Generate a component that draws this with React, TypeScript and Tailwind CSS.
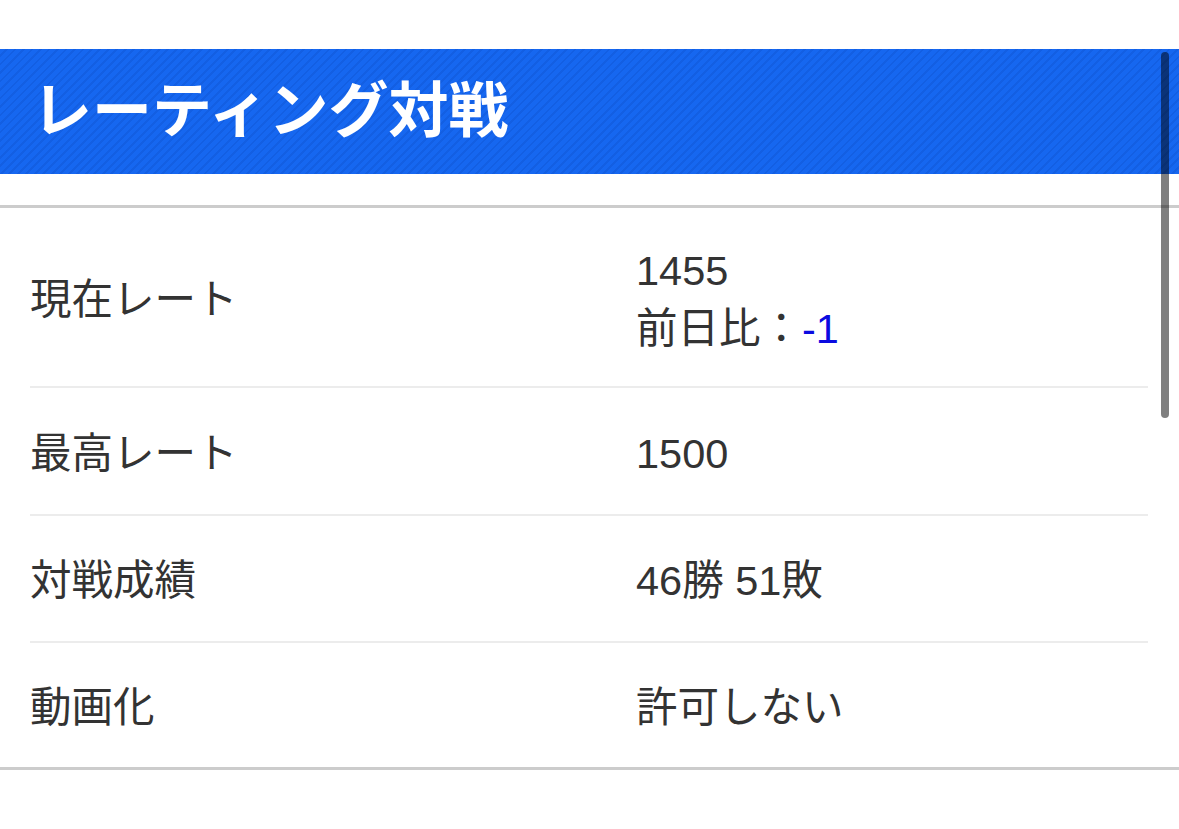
import React from 'react';

type Row = {
  label: string;
  value: React.ReactNode;
  height: string;
  last?: boolean;
};

const rows: Row[] = [
  {
    label: '現在レート',
    value: (
      <>
        <div>1455</div>
        <div>
          前日比：<span className="text-[#0b0be0]">-1</span>
        </div>
      </>
    ),
    height: 'h-[180px]',
  },
  { label: '最高レート', value: '1500', height: 'h-[128px]' },
  { label: '対戦成績', value: '46勝 51敗', height: 'h-[127px]' },
  { label: '動画化', value: '許可しない', height: 'h-[124px]', last: true },
];

function App() {
  return (
    <div className="relative min-h-screen bg-white pt-[49px] font-['Liberation_Sans','Noto_Sans_CJK_JP',sans-serif] text-[#333333]">
      <header className="flex h-[125px] items-center bg-[#1667f0] bg-[image:repeating-linear-gradient(135deg,#1667f0_0px,#1667f0_4px,#135fe3_4px,#135fe3_6px)] px-[32px]">
        <h1 className="text-[60px] font-bold leading-none text-white">レーティング対戦</h1>
      </header>

      <section className="mt-[31px] border-y-[3px] border-[#cccccc]">
        <dl className="ml-[30px] mr-[31px]">
          {rows.map((row) => (
            <div
              key={row.label}
              className={`grid grid-cols-[606px_1fr] items-center pt-[5px] text-[41.5px] leading-[58px] ${row.height} ${
                row.last ? '' : 'border-b-2 border-[#ececec]'
              }`}
            >
              <dt>{row.label}</dt>
              <dd>{row.value}</dd>
            </div>
          ))}
        </dl>
      </section>

      {/* overlay scrollbar */}
      <div className="absolute right-[10px] top-[52px] h-[366px] w-[8px] rounded-full bg-black/50" />
    </div>
  );
}

export default App;
